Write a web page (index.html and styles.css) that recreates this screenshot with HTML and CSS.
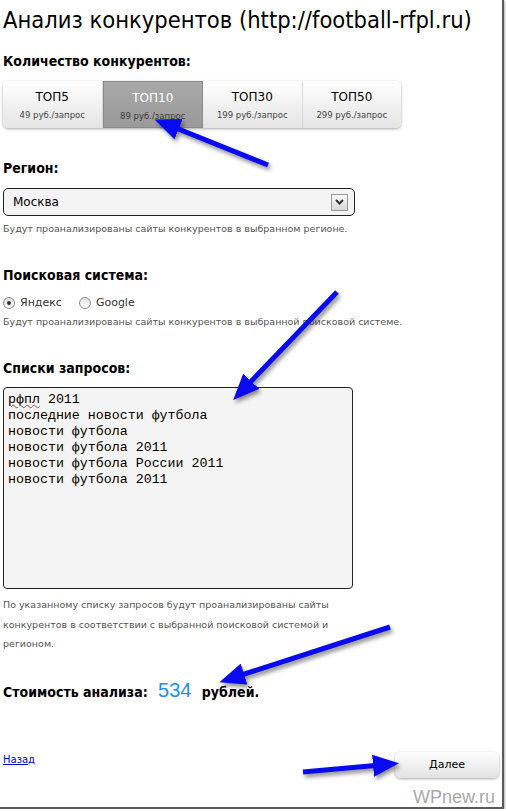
FILE: index.html
```html
<!DOCTYPE html>
<html lang="ru">
<head>
    <meta charset="UTF-8">
    <title>Анализ конкурентов</title>
    <link rel="stylesheet" href="styles.css">
</head>
<body>
    <div class="page">
        <h1 class="title">Анализ конкурентов (http://football-rfpl.ru)</h1>

        <!-- количество конкурентов -->
        <h2 class="label first">Количество конкурентов:</h2>
        <div class="tabs">
            <div class="tab"><span class="tab-name">ТОП5</span><span class="tab-price">49 руб./запрос</span></div>
            <div class="tab active"><span class="tab-name">ТОП10</span><span class="tab-price">89 руб./запрос</span></div>
            <div class="tab"><span class="tab-name">ТОП30</span><span class="tab-price">199 руб./запрос</span></div>
            <div class="tab"><span class="tab-name">ТОП50</span><span class="tab-price">299 руб./запрос</span></div>
        </div>

        <!-- регион -->
        <h2 class="label">Регион:</h2>
        <div class="select">
            <span>Москва</span>
            <span class="select-btn">
                <svg width="9" height="6" viewBox="0 0 9 6"><path d="M1 1 L4.5 4.5 L8 1" fill="none" stroke="#333" stroke-width="2"/></svg>
            </span>
        </div>
        <p class="hint">Будут проанализированы сайты конкурентов в выбранном регионе.</p>

        <!-- поисковая система -->
        <h2 class="label">Поисковая система:</h2>
        <div class="radios">
            <label class="radio"><span class="dot checked"></span>Яндекс</label>
            <label class="radio"><span class="dot"></span>Google</label>
        </div>
        <p class="hint">Будут проанализированы сайты конкурентов в выбранной поисковой системе.</p>

        <!-- запросы -->
        <h2 class="label">Списки запросов:</h2>
        <div class="queries"><span class="typo">рфпл</span> 2011
последние новости футбола
новости футбола
новости футбола 2011
новости футбола России 2011
новости футбола 2011</div>
        <p class="hint note">По указанному списку запросов будут проанализированы сайты конкурентов в соответствии с выбранной поисковой системой и регионом.</p>

        <p class="cost">Стоимость анализа: <span class="price">534</span> рублей.</p>

        <div class="actions">
            <a href="#" class="back">Назад</a>
            <button class="next">Далее</button>
        </div>
        <div class="watermark">WPnew.ru</div>

        <svg class="arrows" width="506" height="811">
            <defs>
                <marker id="head" markerUnits="userSpaceOnUse" markerWidth="26" markerHeight="22" refX="19" refY="11" orient="auto">
                    <path d="M0 0 L26 11 L0 22 Z" fill="#0a0af0"/>
                </marker>
            </defs>
            <g stroke="#0a0af0" stroke-width="5" marker-end="url(#head)">
                <line x1="268" y1="165" x2="161" y2="122"/>
                <line x1="337" y1="292" x2="238" y2="395"/>
                <line x1="390" y1="627" x2="226" y2="680"/>
                <line x1="303" y1="772" x2="392" y2="764"/>
            </g>
        </svg>
    </div>
</body>
</html>
```

FILE: styles.css
```css
body {
    margin: 0;
    background: #fff;
    font-family: "DejaVu Sans", Verdana, sans-serif;
    color: #000;
}
.page {
    position: relative;
    width: 499px;
    height: 807px;
    padding: 0 0 0 3px;
    border-right: 2px solid #5a5a5a;
    border-bottom: 2px solid #5a5a5a;
    box-shadow: 1px 1px 2px rgba(0, 0, 0, 0.3);
    overflow: hidden;
}
.title {
    font-family: "DejaVu Sans Condensed", "DejaVu Sans", sans-serif;
    font-size: 23.5px;
    font-weight: normal;
    margin: 4px 0 0;
    line-height: 32px;
}
.label {
    font-family: "DejaVu Sans Condensed", "DejaVu Sans", sans-serif;
    font-size: 14px;
    font-weight: bold;
    margin: 32px 0 0;
    line-height: 16px;
}
.label.first {
    margin-top: 17px;
}
.tabs {
    display: flex;
    width: 398px;
    height: 47px;
    margin-top: 12px;
    border-radius: 5px;
    box-shadow: 0 1px 3px rgba(0, 0, 0, 0.35);
    overflow: hidden;
}
.tab {
    flex: 1;
    display: flex;
    flex-direction: column;
    align-items: center;
    padding-top: 9px;
    background: linear-gradient(#ffffff, #e4e4e4);
    border-right: 1px solid #d8d8d8;
}
.tab:last-child {
    border-right: none;
}
.tab-name {
    font-size: 12px;
    line-height: 15px;
}
.tab-price {
    font-size: 8.5px;
    color: #444;
    margin-top: 5px;
}
.tab.active {
    background: linear-gradient(#a9a9a9, #9a9a9a);
    border: 1px solid #8a8a8a;
    color: #fff;
}
.tab.active .tab-price {
    color: #3a3a3a;
}
.select {
    display: flex;
    align-items: center;
    width: 335px;
    height: 26px;
    margin-top: 12px;
    padding: 0 6px 0 9px;
    border: 1px solid #222;
    border-radius: 5px;
    background: #f4f4f4;
    font-size: 12px;
}
.select-btn {
    display: flex;
    align-items: center;
    justify-content: center;
    margin-left: auto;
    width: 15px;
    height: 15px;
    border: 1px solid #999;
    background: linear-gradient(#fafafa, #d8d8d8);
}
.hint {
    font-size: 9.5px;
    color: #555;
    margin: 6px 0 0;
    line-height: 13px;
}
.radios {
    display: flex;
    gap: 17px;
    margin-top: 13px;
    font-size: 11px;
    line-height: 13px;
    color: #333;
}
.radio {
    display: flex;
    align-items: center;
    gap: 5px;
}
.dot {
    width: 10px;
    height: 10px;
    border: 1px solid #8a8a8a;
    border-radius: 50%;
    background: linear-gradient(#e0e0e0, #fff);
    position: relative;
}
.dot.checked::after {
    content: "";
    position: absolute;
    left: 3px;
    top: 3px;
    width: 4px;
    height: 4px;
    border-radius: 50%;
    background: #333;
}
.queries {
    width: 340px;
    height: 192px;
    margin-top: 11px;
    padding: 4px 4px;
    border: 1px solid #222;
    border-radius: 4px;
    background: #f4f4f4;
    font-family: "Liberation Mono", "Courier New", monospace;
    font-size: 13.3px;
    line-height: 16px;
    white-space: pre;
}
.typo {
    text-decoration: underline wavy #d33;
    text-decoration-thickness: 1px;
}
.note {
    width: 335px;
    line-height: 19.5px;
    margin-top: 6px;
}
.cost {
    font-family: "DejaVu Sans Condensed", "DejaVu Sans", sans-serif;
    font-size: 14px;
    font-weight: bold;
    line-height: 20px;
    margin: 26px 0 0;
}
.price {
    font-family: "Liberation Sans", Arial, sans-serif;
    color: #1e8ee6;
    font-weight: normal;
    font-size: 20px;
    margin: 0 6px;
}
.actions {
    display: flex;
    justify-content: space-between;
    align-items: flex-start;
    margin-top: 50px;
    padding-right: 3px;
}
.back {
    font-size: 10px;
    color: #0000cc;
    margin-top: 2px;
}
.next {
    width: 104px;
    height: 26px;
    border: none;
    border-radius: 6px;
    background: linear-gradient(#ffffff, #e2e2e2);
    box-shadow: 0 1px 3px rgba(0, 0, 0, 0.35);
    font-family: "DejaVu Sans", Verdana, sans-serif;
    font-size: 11px;
}
.watermark {
    text-align: right;
    font-family: "Liberation Sans", Arial, sans-serif;
    font-size: 18px;
    line-height: 20px;
    color: #a8a8a8;
    margin: 9px 7px 0 0;
}
.arrows {
    position: absolute;
    left: 0;
    top: 0;
    pointer-events: none;
    filter: drop-shadow(2px 3px 2px rgba(0, 0, 0, 0.45));
}
```
